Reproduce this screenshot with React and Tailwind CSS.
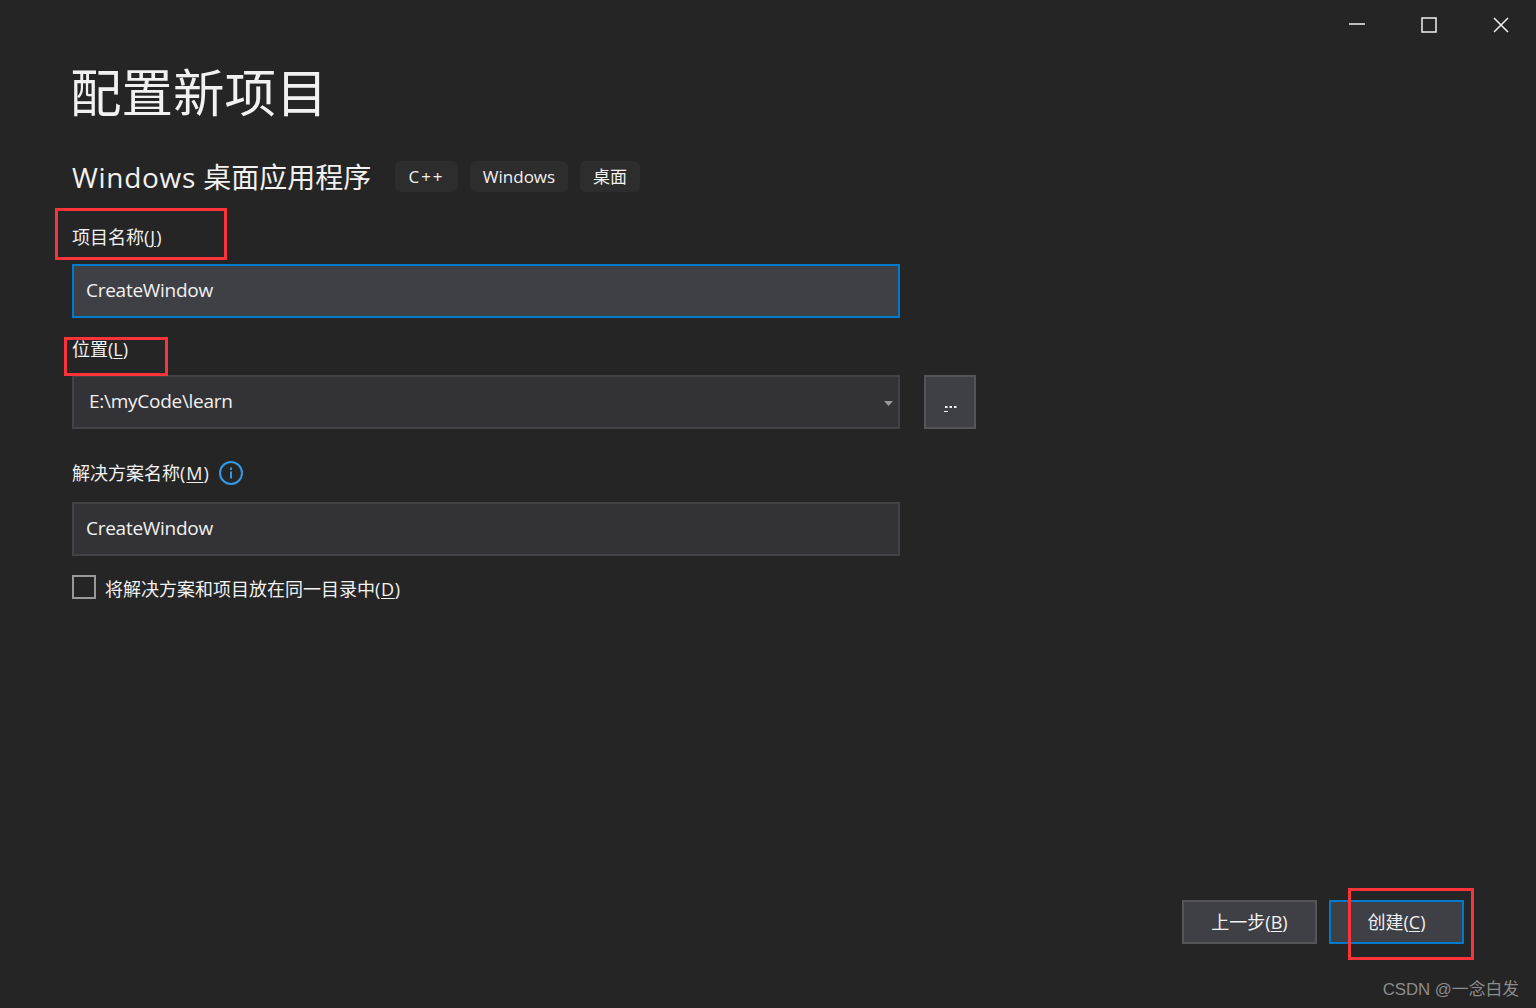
const sans = "font-['Open_Sans','Noto_Sans_CJK_SC',sans-serif]";

function Field({ value, className = "", children }) {
  return (
    <div className={`flex h-[54px] w-[828px] items-center border-2 pl-3 pr-2 text-[19px] tracking-[-0.27px] text-[#f1f1f1] ${className}`}>
      <span className="mb-[2px] flex-1 leading-none">{value}</span>
      {children}
    </div>
  );
}

function Tag({ children, className = "" }) {
  return (
    <span className={`flex h-[31px] items-center justify-center rounded-md bg-[#2d2d2d] text-[17px] text-[#f1f1f1] ${className}`}>
      {children}
    </span>
  );
}

function Label({ children, k, wide = "" }) {
  return (
    <span className="text-[18px] leading-[24px] text-[#f1f1f1]">
      {children}
      <span className={wide}>
        (<span className="underline underline-offset-2">{k}</span>)
      </span>
    </span>
  );
}

function Red({ className }) {
  return <div className={`absolute border-[3px] border-[#fc3439] ${className}`} />;
}

export default function App() {
  return (
    <div className={`relative flex h-[1008px] w-[1536px] flex-col overflow-hidden bg-[#252526] ${sans}`}>
      <div className="flex h-[50px] justify-end">
        <svg width="206" height="50" viewBox="0 0 206 50" fill="none" stroke="#f1f1f1" strokeWidth="1.5">
          <path d="M19 24h16" />
          <rect x="92" y="18" width="14" height="14" />
          <path d="M164 18l14 14M178 18l-14 14" />
        </svg>
      </div>

      <main className="flex flex-1 flex-col pl-[72px]">
        <h1 className="-ml-[2px] mt-[7px] h-[71px] text-[51.5px] font-normal leading-[70px] text-[#f1f1f1]">配置新项目</h1>

        <div className="mt-[33px] flex h-[31px] items-center">
          <span className="w-[323px] text-[28px] leading-none text-[#f1f1f1]">
            <span className="tracking-[0.7px]">Windows</span> 桌面应用程序
          </span>
          <div className="flex gap-3">
            <Tag className="w-[63px] tracking-[2px]">C++</Tag>
            <Tag className="w-[98px]">Windows</Tag>
            <Tag className="w-[60px]">桌面</Tag>
          </div>
        </div>

        <div className="mt-[33px]">
          <Label k="J" wide="tracking-[1px]">项目名称</Label>
        </div>
        <Field value="CreateWindow" className="mt-[14px] border-[#007acc] bg-[#3f3f46]" />

        <div className="mt-[19px]">
          <Label k="L">位置</Label>
        </div>
        <div className="mt-[13px] flex gap-6">
          <Field value="E:\myCode\learn" className="border-[#434346] bg-[#333337] pl-[15px]">
            <svg width="9" height="5" viewBox="0 0 9 5" className="-mr-[3px] mt-[2px]">
              <path d="M0 0h9L4.5 5z" fill="#999999" />
            </svg>
          </Field>
          <button className="flex h-[54px] w-[52px] items-end justify-center border-2 border-[#555558] bg-[#3f3f46] pb-[15px] text-[#f1f1f1]">
            <svg width="13" height="6" viewBox="0 0 13 6">
              <path d="M1 0h2.500v2H1zM5.500 0h2.500v2h-2.500zM10 0h2.500v2h-2.500z" fill="#f1f1f1" />
              <path d="M0 5h4v1H0z" fill="#f1f1f1" />
            </svg>
          </button>
        </div>

        <div className="mt-[32px] flex h-[24px] items-center gap-[9px]">
          <Label k="M" wide="tracking-[1px]">解决方案名称</Label>
          <svg width="24" height="24" viewBox="0 0 24 24" fill="none">
            <circle cx="12" cy="12" r="11" stroke="#3399e6" strokeWidth="2" />
            <path d="M12 6.500v2.500M12 10.500v7" stroke="#3399e6" strokeWidth="2" />
          </svg>
        </div>
        <Field value="CreateWindow" className="mt-[17px] border-[#434346] bg-[#333337]" />

        <div className="mt-[19px] flex h-[24px] items-center gap-[9px]">
          <span className="h-6 w-6 border-2 border-[#999999]" />
          <span className="pt-1">
            <Label k="D" wide="tracking-[0.7px]">将解决方案和项目放在同一目录中</Label>
          </span>
        </div>
      </main>

      <footer className="flex flex-col items-end pr-[17px]">
        <div className="mr-[55px] flex gap-3">
          <button className="h-[44px] w-[135px] border-2 border-[#555558] bg-[#3f3f46] text-[18px] text-[#f1f1f1]">
            上一步(<span className="underline underline-offset-2">B</span>)
          </button>
          <button className="h-[44px] w-[135px] border-2 border-[#007acc] bg-[#3f3f46] text-[18px] text-[#f1f1f1]">
            创建(<span className="underline underline-offset-2">C</span>)
          </button>
        </div>
        <div className="mb-[6px] mt-[34px] font-['Liberation_Sans','Noto_Sans_CJK_SC',sans-serif] text-[16.8px] leading-[24px] text-[#8c8c8c]">
          CSDN @一念白发
        </div>
      </footer>

      <Red className="left-[55px] top-[208px] h-[52px] w-[172px]" />
      <Red className="left-[64px] top-[337px] h-[39px] w-[104px]" />
      <Red className="left-[1348px] top-[888px] h-[72px] w-[126px]" />
    </div>
  );
}
